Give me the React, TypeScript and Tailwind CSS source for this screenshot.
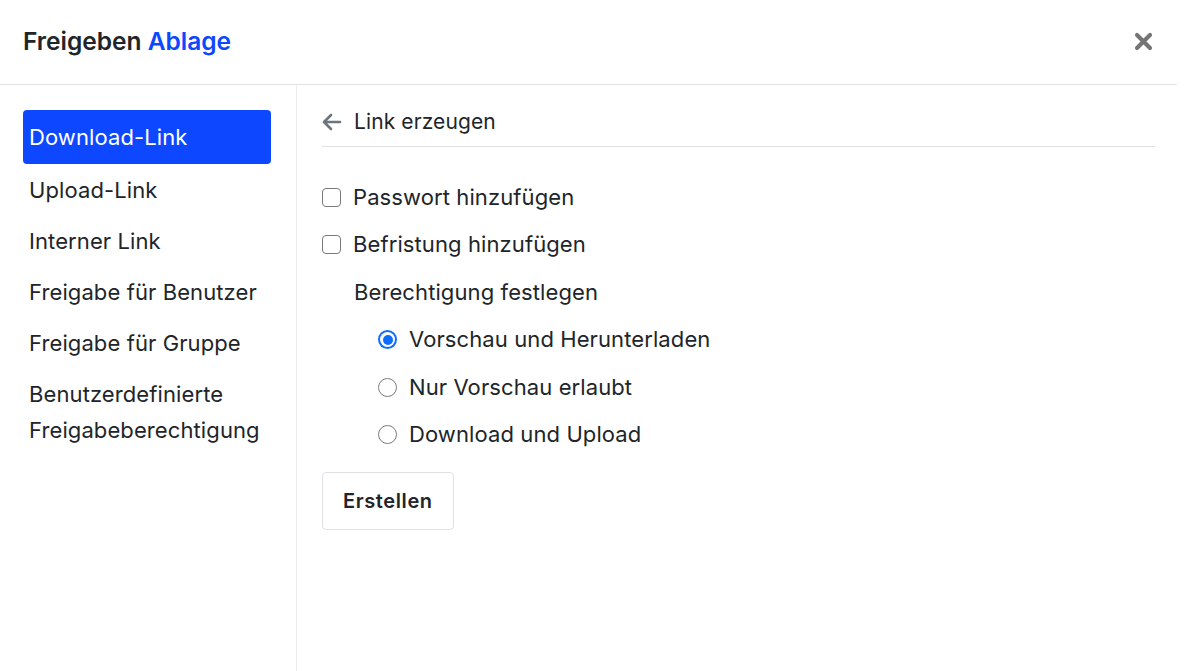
import React, { useState } from 'react';

const navItems = [
  'Download-Link',
  'Upload-Link',
  'Interner Link',
  'Freigabe für Benutzer',
  'Freigabe für Gruppe',
  'Benutzerdefinierte Freigabeberechtigung',
];

const permissions = ['Vorschau und Herunterladen', 'Nur Vorschau erlaubt', 'Download und Upload'];

function CheckRow({ label }: { label: string }) {
  const [checked, setChecked] = useState(false);
  return (
    <label className="flex items-center h-[47px] cursor-pointer" onClick={() => setChecked(!checked)}>
      <span
        className={`w-[19px] h-[19px] shrink-0 rounded-[4px] border ${
          checked ? 'bg-[#0d47ff] border-[#0d47ff]' : 'border-[#7a7a7a] bg-white'
        }`}
      />
      <span className="ml-[12px]">{label}</span>
    </label>
  );
}

export default function App() {
  const [active, setActive] = useState(0);
  const [perm, setPerm] = useState(0);

  return (
    <div
      className="w-[1177px] h-[671px] flex flex-col bg-white text-[#212529]"
      style={{ fontFamily: 'Inter, "Noto Sans", sans-serif' }}
    >
      <header className="h-[85px] shrink-0 flex items-center justify-between pl-[23px] pr-[24px] pb-[2px] border-b border-[#dee2e6]">
        <h1 className="text-[24.5px] font-semibold">
          Freigeben <span className="text-[#0d47ff]">Ablage</span>
        </h1>
        <button className="w-[20px] h-[20px] flex items-center justify-center">
          <svg width="19" height="19" viewBox="0 0 19 19">
            <path d="M3 3 L16 16 M16 3 L3 16" stroke="#757575" strokeWidth="4.2" strokeLinecap="round" />
          </svg>
        </button>
      </header>

      <div className="flex flex-1 min-h-0">
        <nav className="w-[297px] shrink-0 border-r border-[#e9ecef] pt-[25px] pl-[23px] pr-[25px] text-[22px] tracking-[0.1px]">
          {navItems.map((item, i) => (
            <div
              key={item}
              onClick={() => setActive(i)}
              className={`px-[6px] leading-[36px] rounded-[4px] cursor-pointer ${
                i === active ? 'bg-[#0d47ff] text-white py-[9px]' : 'text-[#212529] py-[7.5px]'
              }`}
            >
              {item}
            </div>
          ))}
        </nav>

        <main className="flex-1 pl-[25px] pr-[22px] pt-[22px] text-[22px] tracking-[0.1px]">
          <div className="flex items-center h-[40px] pb-[10px] border-b border-[#dee2e6]">
            <svg width="20" height="18" viewBox="0 0 20 18" className="shrink-0">
              <path
                d="M9 2 L2 9 L9 16 M2 9 H18"
                fill="none"
                stroke="#6c757d"
                strokeWidth="2.6"
                strokeLinecap="round"
                strokeLinejoin="round"
              />
            </svg>
            <span className="ml-[12px] text-[21px]">Link erzeugen</span>
          </div>

          <div className="pt-[27px]">
            <CheckRow label="Passwort hinzufügen" />
            <CheckRow label="Befristung hinzufügen" />
            <div className="h-[48px] flex items-center pl-[32px]">Berechtigung festlegen</div>
            {permissions.map((p, i) => (
              <label
                key={p}
                onClick={() => setPerm(i)}
                className="flex items-center h-[47.5px] pl-[56px] cursor-pointer"
              >
                {i === perm ? (
                  <span className="w-[19px] h-[19px] shrink-0 rounded-full bg-[#0d6efd] flex items-center justify-center">
                    <span className="w-[15px] h-[15px] rounded-full bg-white flex items-center justify-center">
                      <span className="w-[10px] h-[10px] rounded-full bg-[#0d6efd]" />
                    </span>
                  </span>
                ) : (
                  <span className="w-[19px] h-[19px] shrink-0 rounded-full border border-[#7a7a7a] bg-white" />
                )}
                <span className="ml-[12px]">{p}</span>
              </label>
            ))}
          </div>

          <button className="mt-[13px] h-[58px] px-[20px] border border-[#dee2e6] rounded-[4px] text-[20px] font-semibold tracking-[0.6px] bg-white">
            Erstellen
          </button>
        </main>
      </div>
    </div>
  );
}
